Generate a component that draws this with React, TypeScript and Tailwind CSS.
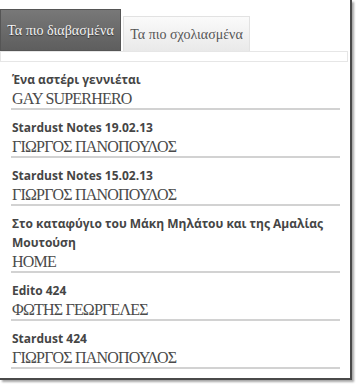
import React from "react";

const items: { title: string; author: string }[] = [
  { title: "Ένα αστέρι γεννιέται", author: "GAY SUPERHERO" },
  { title: "Stardust Notes 19.02.13", author: "ΓΙΩΡΓΟΣ ΠΑΝΟΠΟΥΛΟΣ" },
  { title: "Stardust Notes 15.02.13", author: "ΓΙΩΡΓΟΣ ΠΑΝΟΠΟΥΛΟΣ" },
  { title: "Στο καταφύγιο του Μάκη Μηλάτου και της Αμαλίας Μουτούση", author: "HOME" },
  { title: "Edito 424", author: "ΦΩΤΗΣ ΓΕΩΡΓΕΛΕΣ" },
  { title: "Stardust 424", author: "ΓΙΩΡΓΟΣ ΠΑΝΟΠΟΥΛΟΣ" },
];

export default function App() {
  return (
    <div className="w-[356px] h-[384px] bg-white overflow-hidden">
      <div className="w-[352px] h-[380px] bg-white border-r-2 border-b-2 border-[#4a4a4a] shadow-[2px_2px_2px_rgba(0,0,0,0.35)] overflow-hidden">
        <div className="flex items-end pt-[9px] h-[51px] font-['Liberation_Serif',serif]">
          <div className="h-[42px] w-[121px] flex items-center justify-center bg-gradient-to-b from-[#787878] to-[#5e5e5e] border border-[#555] text-[#f4f4f4] text-[14px] [text-shadow:0_1px_1px_rgba(0,0,0,0.5)]">
            Τα πιο διαβασμένα
          </div>
          <div className="ml-[2px] h-[35px] w-[127px] flex items-center justify-center bg-gradient-to-b from-[#fafafa] to-[#e9e9e9] border border-[#e2e2e2] border-b-0 text-[#555] text-[14px]">
            Τα πιο σχολιασμένα
          </div>
        </div>
        <div className="h-[11px] w-[348px] border border-[#e6e6e6]" />
        <div className="pl-[12px] pr-[10px] pt-[8px]">
          {items.map((it, i) => (
            <div key={i} className="mb-[8px] border-b-2 border-[#d2d2d2] -ml-[1px] pl-[1px]">
              <div className="font-['Open_Sans',sans-serif] font-bold text-[12px] leading-[19px] text-[#454545]">
                {it.title}
              </div>
              <div className="font-['Liberation_Serif',serif] text-[16px] tracking-[-0.8px] leading-[19px] text-[#4a4a4a]">
                {it.author}
              </div>
            </div>
          ))}
        </div>
      </div>
    </div>
  );
}
